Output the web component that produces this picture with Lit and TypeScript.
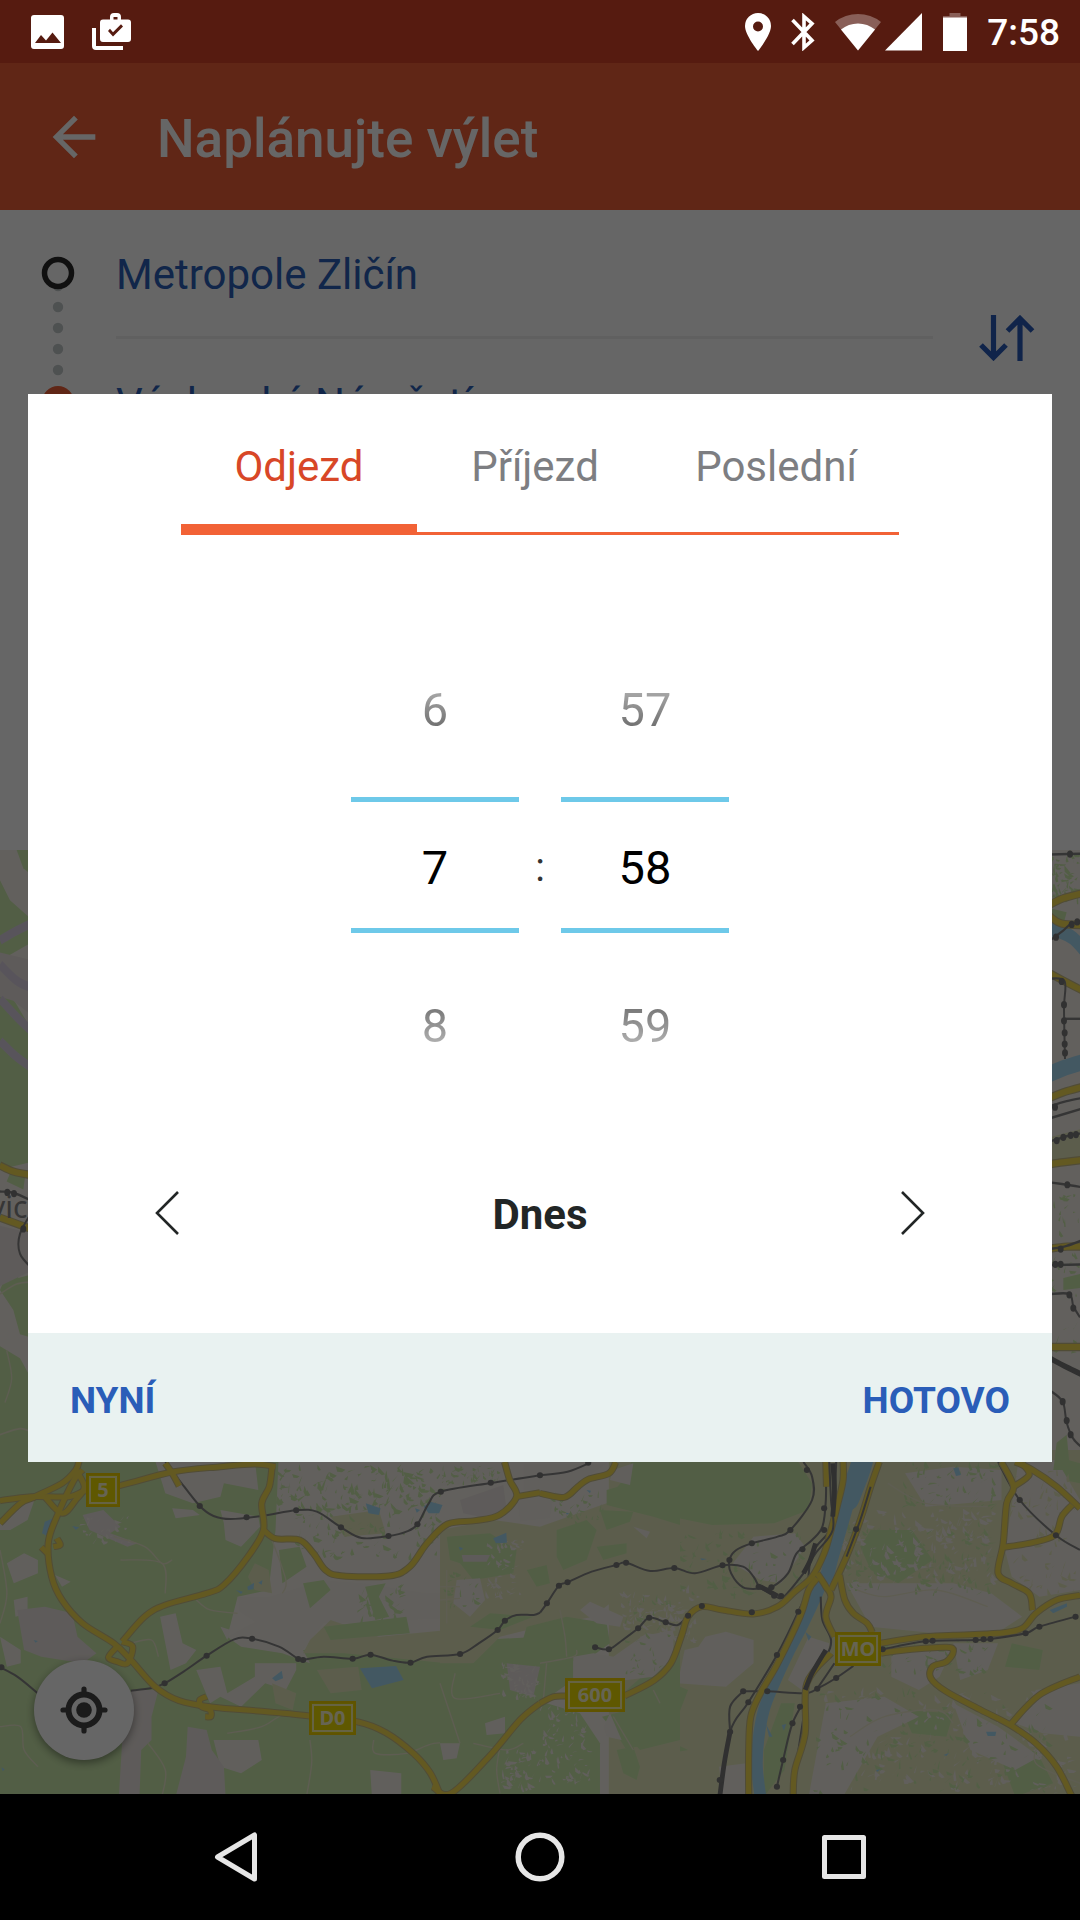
import { LitElement, html, svg, css } from "lit";
import { customElement, state } from "lit/decorators.js";
import { classMap } from "lit/directives/class-map.js";

type Pt = [number, number];

/* Turns "x,y x,y ..." into points. */
const pts = (s: string): Pt[] =>
  s.trim().split(/\s+/).map((p) => p.split(",").map(Number) as Pt);

/* Smooth path through the given points. */
const curve = (s: string): string => {
  const p = pts(s);
  let d = `M${p[0][0]} ${p[0][1]}`;
  for (let i = 0; i < p.length - 1; i++) {
    const a = p[i - 1] ?? p[i];
    const b = p[i];
    const c = p[i + 1];
    const e = p[i + 2] ?? c;
    d += `C${b[0] + (c[0] - a[0]) / 6} ${b[1] + (c[1] - a[1]) / 6} ${c[0] - (e[0] - b[0]) / 6} ${c[1] - (e[1] - b[1]) / 6} ${c[0]} ${c[1]}`;
  }
  return d;
};

const area = (cls: string, list: string[]) =>
  list.map((s) => svg`<polygon class=${cls} points=${s}></polygon>`);
const roads = (list: string[]) => [
  ...list.map((s) => svg`<path class="casing" d=${curve(s)}></path>`),
  ...list.map((s) => svg`<path class="road" d=${curve(s)}></path>`),
];
const rails = (list: string[]) =>
  list.map((s) => svg`<path class="track" d=${curve(s)}></path>`);
const lanes = (list: string[]) =>
  list.map((s) => svg`<path class="lane" d=${curve(s)}></path>`);
const stops = (s: string) =>
  pts(s).map(([x, y]) => svg`<circle class="stop" cx=${x} cy=${y} r="9"></circle>`);

/* Small scattered parcels that give built-up zones their texture. */
const parcels = (cls: string, seed: number, n: number, x: number, y: number, w: number, h: number, size: number) => {
  let s = seed;
  const rnd = () => (s = (s * 16807) % 2147483647) / 2147483647;
  let d = "";
  for (let i = 0; i < n; i++) {
    const cx = x + rnd() * w;
    const cy = y + rnd() * h;
    const a = rnd() * 3;
    const l = size * (0.4 + rnd());
    const t = size * (0.2 + rnd() * 0.5);
    const ux = Math.cos(a), uy = Math.sin(a);
    d += `M${(cx - ux * l).toFixed(0)} ${(cy - uy * l).toFixed(0)}l${(ux * l * 2).toFixed(0)} ${(uy * l * 2).toFixed(0)}l${(-uy * t - ux * l * 0.5).toFixed(0)} ${(ux * t).toFixed(0)}l${(-ux * l).toFixed(0)} ${(-uy * l + t * 0.4).toFixed(0)}z`;
  }
  return svg`<path class=${cls} d=${d}></path>`;
};

const WEST = "translate(0 600) scale(.3444 .3333)";
const EAST = "translate(540 600) scale(.3444 .3333)";
const MIDDLE = "translate(440 600) scale(.3333)";
const LEFT_EDGE = "translate(0 -10) scale(.3333 .4018)";
const RIGHT_EDGE = "translate(1030 -10) scale(.3333 .4018)";

@customElement("city-map")
class CityMap extends LitElement {
  static styles = css`
    :host { display: block; overflow: hidden; background: #f5f0e8; }
    .canvas { display: block; width: 100%; height: 100%; }
    .land { fill: #f3eee7; }
    .green { fill: #cdebad; }
    .olive { fill: #e6e9bf; }
    .town { fill: #ebe4e0; }
    .lake { fill: #a8dcf5; }
    .river { fill: none; stroke: #a8dcf5; stroke-linecap: round; stroke-linejoin: round; }
    .lane { fill: none; stroke: #ebe8cc; stroke-width: 4; }
    .violet { fill: none; stroke: #dcd3e4; stroke-width: 22; }
    .casing { fill: none; stroke: #c9be88; stroke-width: 21; stroke-linejoin: round; }
    .road { fill: none; stroke: #f8de54; stroke-width: 15; stroke-linejoin: round; }
    .track { fill: none; stroke: #868686; stroke-width: 6; }
    .heavy { fill: none; stroke: #787878; stroke-width: 14; }
    .stop { fill: #7c7c7c; }
    .plate { fill: #eedb00; stroke: #f0d000; stroke-width: 2; }
    .inset { fill: none; stroke: #fff8a8; stroke-width: 2; }
    .ref { fill: #fffbd0; font: 700 20px "Noto Sans", sans-serif; text-anchor: middle; }
    .place { fill: #888; font: 400 30px "Noto Sans", sans-serif; }
  `;

  private plate(x: number, y: number, w: number, label: string) {
    return svg`<rect class="plate" x=${x} y=${y} width=${w} height="32"></rect>
      <rect class="inset" x=${x + 3} y=${y + 3} width=${w - 6} height="26"></rect>
      <text class="ref" x=${x + w / 2} y=${y + 23}>${label}</text>`;
  }

  private westLand() {
    return svg`<g transform=${WEST}>
      ${area("green", ["0,0 810,0 800,240 780,420 690,440 660,560 880,600 1568,560 1568,1040 0,1040"])}
      ${area("land", [
        "450,30 740,30 750,120 650,100 640,140 560,160 480,130",
        "640,180 750,200 755,230 700,290 655,270 650,220", "0,210 40,170 100,150 80,210 30,240 0,240",
        "20,340 70,310 110,330 110,370 40,400", "40,450 80,440 80,490 45,500", "0,560 60,600 60,640 20,650",
        "465,500 510,490 530,580 570,600 540,640 495,660",
        "690,440 780,440 940,390 1060,400 1240,430 1390,420 1400,500 1200,510 1100,520 940,520 880,600 900,640 820,610 700,590 660,560 740,515 695,485",
        "570,660 640,650 660,730 740,680 740,640 860,640 860,660 830,720 770,700 700,770 640,740 610,760",
        "620,870 750,870 760,930 700,970 640,950", "1075,960 1165,970 1165,1040 1080,1040",
        "500,175 560,180 580,195 510,205", "160,375 205,395 180,410", "640,530 670,540 660,570",
      ])}
      ${area("town", [
        "50,480 130,470 210,490 225,560 280,610 240,640 120,620 70,600", "380,720 460,720 440,800 440,870 410,900 405,1040 345,1040 355,870 385,800",
        "545,830 600,840 615,900 650,950 655,1040 510,1040 540,920",
        "240,195 300,180 350,230 320,250 400,280 370,290 260,240",
      ])}
      ${area("olive", [
        "960,200 1100,180 1120,250 1000,260", "900,570 960,510 1100,560 1300,540 1300,640 1000,610 880,610",
        "740,340 780,360 790,430 740,420 720,380", "790,700 860,730 850,780 800,760", "920,660 1040,650 1050,720 960,730",
      ])}
      ${area("green", [
        "810,300 870,290 890,350 820,400", "880,400 940,390 960,420 900,475", "940,530 1180,500 1190,550 960,570",
        "1060,410 1120,400 1100,440 1130,500 1090,510",
      ])}
      ${parcels("green", 77, 150, 810, 50, 480, 130, 13)}
      ${parcels("green", 91, 90, 860, 190, 420, 130, 11)}
      ${parcels("green", 13, 40, 1050, 400, 120, 110, 12)}
      ${parcels("land", 41, 30, 240, 190, 140, 90, 9)}
      ${lanes([
        "350,330 470,340 480,430", "790,270 830,390 820,430", "430,880 480,960 470,1040", "660,850 760,830 830,790 900,800",
        "900,870 905,940 890,1040", "1085,870 1090,910 1180,910 1260,880 1350,880", "0,300 20,430 0,520", "330,260 420,290 470,340 500,330",
        "570,450 610,480 690,490", "380,580 440,570 460,620", "0,830 60,830 70,900 110,950",
      ])}
    </g>`;
  }

  private eastLand() {
    return svg`<g transform=${EAST}>
      ${area("olive", ["200,0 1568,0 1568,1040 200,1040"])}
      ${area("green", [
        "270,20 740,20 790,100 780,180 680,220 500,225 330,190 200,140 250,80",
        "360,690 430,720 400,800 290,830 430,900 270,930 220,850 180,800 330,760", "700,760 740,760 710,960 650,1040 650,900",
        "1370,580 1460,600 1450,660 1350,650", "960,240 1080,240 1140,330 1040,400 960,360 930,290",
        "1500,20 1568,40 1568,100 1520,90", "1050,780 1200,790 1180,860 1080,850", "1340,930 1440,900 1490,1000 1380,1040",
      ])}
      ${area("land", [
        "480,560 540,545 620,570 620,640 540,710 400,700 420,600 460,590",
        "1060,70 1200,50 1340,60 1340,150 1120,170", "890,400 1000,400 1200,400 1310,430 1400,500 1340,540 1150,550 960,530",
        "1390,30 1500,30 1568,150 1568,420 1450,440 1370,380 1350,300", "1020,600 1200,590 1160,680 1100,720 1020,680",
        "1200,580 1330,580 1300,660 1220,690", "780,560 840,580 830,640 760,720 720,690", "620,260 740,250 770,290 700,400 640,390 560,340",
        "830,760 1000,740 1100,800 980,860 880,1040 780,1040",
        "1200,760 1330,830 1450,920 1380,960 1250,900", "1440,720 1568,700 1568,860 1460,850 1380,820", "520,950 600,940 600,1040 530,1040",
      ])}
      ${parcels("land", 11, 170, 880, 180, 450, 220, 12)}
      ${parcels("green", 17, 150, 890, 220, 430, 210, 10)}
      ${parcels("green", 19, 70, 1060, 40, 270, 130, 11)}
      ${parcels("land", 31, 200, 830, 720, 730, 310, 12)}
      ${parcels("green", 53, 160, 800, 720, 700, 310, 11)}
      ${parcels("land", 61, 60, 350, 390, 110, 190, 11)}
      ${parcels("green", 67, 90, 380, 250, 380, 190, 11)}
      ${parcels("olive", 71, 80, 1370, 60, 190, 380, 12)}
      ${parcels("green", 97, 60, 1000, 560, 300, 110, 10)}
      ${lanes(["920,420 1000,440 1150,420 1300,470", "1010,100 1120,160 1300,170", "900,860 1000,800 1150,780 1200,820", "1460,860 1440,940 1568,1000"])}
    </g>`;
  }

  private middleLand() {
    return svg`<g transform=${MIDDLE}>
      ${area("olive", ["0,240 160,210 300,230 500,160 600,190 720,230 720,460 560,420 460,500 300,530 180,560 100,640 0,660", "530,900 720,870 720,1040 560,1040"])}
      ${area("green", [
        "590,30 720,30 720,225 640,200 500,165 500,120 570,100", "20,260 150,250 230,300 220,370 100,390 60,340 30,330",
        "350,240 440,210 470,240 440,330 370,360 350,320", "260,360 320,345 330,400 290,410", "480,180 580,185 570,215 500,240", "470,290 560,280 560,310 490,330",
        "260,530 380,500 500,520 510,580 440,630 300,640 240,600", "90,530 150,490 280,500 180,540", "0,640 100,640 200,600 300,640 400,620 400,690 300,760 200,830 200,900 0,900",
        "0,890 200,860 220,1040 0,1040", "560,720 720,580 720,870 600,900 530,820", "200,820 320,760 420,790 480,880 480,1040 200,1040",
        "530,900 580,890 600,950 590,990 550,970",
      ])}
      ${area("land", [
        "0,40 190,40 190,90 0,110", "230,150 340,150 330,205 240,215", "250,40 500,40 430,90 390,135 250,120", "520,60 580,40 570,105 510,90",
        "50,390 120,385 135,450 90,500 40,460", "420,480 450,455 550,500 540,530 470,520", "520,620 620,550 700,560 700,620 640,680 560,690 400,690 400,620 460,610",
        "135,820 195,800 195,850 140,855", "0,880 60,880 50,925 10,930", "490,830 510,790 545,870 500,860", "580,230 630,245 620,265", "600,560 700,540 690,640 640,660",
      ])}
      ${area("town", ["60,150 190,105 200,180 140,205 70,190", "65,315 150,315 140,335 70,335", "200,640 300,650 280,740 210,720"])}
      ${parcels("green", 83, 50, 10, 50, 170, 50, 9)}
      ${parcels("green", 85, 40, 340, 130, 150, 90, 9)}
      ${parcels("land", 87, 60, 140, 270, 110, 180, 9)}
      ${parcels("land", 59, 90, 300, 760, 150, 240, 9)}
      ${parcels("land", 23, 50, 190, 640, 110, 100, 9)}
      ${parcels("land", 29, 45, 190, 890, 110, 130, 11)}
      ${parcels("land", 61, 60, 550, 430, 170, 110, 9)}
      ${parcels("green", 63, 50, 560, 440, 150, 240, 9)}
      ${parcels("green", 65, 30, 20, 360, 100, 110, 9)}
      ${lanes(["20,360 20,520", "0,410 60,410", "0,450 60,445", "360,480 375,560 380,620", "300,640 400,620 410,600", "45,670 45,745 180,730", "320,640 310,750", "0,700 50,850 60,880", "100,880 200,900 250,880", "180,890 170,960 180,1030", "520,800 580,900", "640,720 660,760"])}
    </g>`;
  }

  private westLines() {
    return svg`<g transform=${WEST}>
      ${area("lake", [
        "1045,655 1150,648 1172,690 1080,715", "1062,160 1105,175 1100,195 1070,190", "1230,170 1250,155 1285,165 1275,190 1245,190",
        "1432,265 1470,248 1472,278 1440,280", "790,685 818,662 822,685 800,694", "130,215 155,205 140,260 122,250",
        "718,410 738,398 736,418 720,420", "750,398 762,390 760,404", "210,228 230,232 220,240", "685,420 705,425 700,432",
        "1205,175 1220,180 1210,188", "1332,290 1345,295 1336,302", "4,952 14,958 8,964", "98,570 110,573 103,578",
      ])}
      ${rails([
        "480,36 520,90 580,168 620,198 670,207 760,198 860,181 920,185 990,232 1050,264 1130,258 1180,245 1212,223 1245,160 1280,125 1430,98 1568,76",
        "0,652 50,680 110,730", "380,722 440,714 478,700 540,660 600,617 680,568 732,566 810,590 866,627 880,630 940,620 1026,626 1076,614 1140,632 1192,638 1240,620 1336,612 1390,580 1445,540 1466,512 1500,495 1550,495 1568,488",
      ])}
      ${roads([
        "0,152 90,140 200,140 250,122 350,106 500,66 640,50 740,42 800,50", "100,140 180,100 220,60 230,30", "0,220 60,160 100,142",
        "130,140 180,190 220,150 245,110 220,60", "480,40 500,70 520,108", "240,60 215,90 165,200 140,280 150,380 180,450 240,520 330,580 380,630 450,710 520,752 620,772 760,784 900,798 1040,816 1120,848 1200,910 1250,970 1280,1040",
        "120,292 138,310", "165,265 175,285 155,290", "790,50 782,110 760,160 765,240 720,320 650,405 600,430 480,465 420,500 355,575", "765,240 800,266 870,270 910,310 945,360 990,377 1130,378 1190,350 1240,280 1300,222 1380,212 1450,195 1500,140 1480,90 1465,36",
        "1500,140 1568,128", "355,575 385,590 370,640 340,635 315,622 340,590", "600,740 580,750 585,770 610,780 612,800 596,800", "1255,1010 1310,1030 1420,920 1510,810 1568,760",
      ])}
      ${stops("580,168 716,202 860,181 990,232 1128,258 1212,223 1280,125 1425,98 478,700 600,617 732,566 866,627 880,630 1024,626 1076,614 1192,638 1336,612 1445,540 1466,512 4,652")}
    </g>`;
  }

  private eastLines() {
    return svg`<g transform=${EAST}>
      <path class="river" stroke-width="62" d=${curve("945,0 925,70 895,150")}></path>
      <path class="river" stroke-width="40" d=${curve("895,150 870,240 845,330 832,385")}></path>
      <path class="river" stroke-width="34" d=${curve("815,400 805,430 760,530 720,610 680,700 650,780 634,870 630,950 640,1040")}></path>
      ${area("lake", [
        "1200,55 1215,52 1222,75 1208,78", "1480,480 1530,460 1530,470 1490,490", "1295,845 1325,845 1322,858 1300,858", "1172,915 1188,908 1180,918",
        "975,960 988,958 980,966", "770,545 788,560 780,572", "655,820 675,860 665,860", "465,325 485,327 470,331", "702,825 715,822 708,842", "135,120 148,122 145,130", "75,188 85,190 78,194",
      ])}
      ${rails([
        "0,76 80,65 145,38", "0,488 20,460 55,407 80,397 150,365 222,345 250,338 320,363 390,354 450,370 530,346 590,350 620,380 635,410",
        "765,36 790,80 790,150 727,240 690,260 615,280 570,300 550,330 555,370 590,412 640,416 672,412 720,370 745,310 790,270 820,230 830,150 830,36",
        "635,410 680,437 710,438 780,350", "860,36 855,150 845,235 790,310 775,420 750,485 688,615 605,757 552,845 520,1040",
        "430,497 400,525 365,517 317,503 285,535 240,570 200,598 160,592", "590,724 660,724 770,730 805,716 860,684 910,648", "805,716 855,640",
        "775,740 733,820 706,930 688,1010", "552,845 552,770 590,724", "1330,36 1393,150 1498,256 1568,300",
        "815,440 820,510 845,570 830,620 780,690 770,770 735,1000",
      ])}
      ${roads([
        "0,130 70,142 110,110 140,88 200,70 220,36", "0,760 40,740 75,738", "245,738 330,692 380,640 410,560 430,500 470,470 530,480 620,492 690,470 740,425 790,380 825,310 845,240 865,160 880,90 880,30",
        "830,36 832,110", "985,36 960,110 930,210 890,320 845,420", "805,385 780,420 755,500 690,640 640,730 612,800 606,900 606,1040", "805,370 830,410 845,440 830,500 855,560",
        "870,375 885,450 910,490 950,520 965,548", "990,580 1100,562 1200,556 1330,550 1400,535 1440,490 1500,450 1568,436", "990,610 1060,600 1180,592 1200,605 1180,635 1140,650 1135,685 1180,725 1280,780 1365,825 1440,880 1500,950 1545,1040",
        "1365,825 1450,735 1568,680", "1380,36 1430,60 1500,110 1568,175", "1340,36 1375,110 1355,160 1345,280 1330,370 1370,400 1420,430 1430,480", "1375,110 1420,75 1400,40",
        "1345,292 1430,278 1495,255 1515,200 1545,165", "845,610 775,700 770,850 740,960 735,1040",
      ])}
      ${rails(["840,36 845,150 850,240 800,310 775,350", "995,598 1120,574 1270,570 1310,567 1410,550 1450,530 1555,500", "960,110 930,210 890,320"])}
      <path class="heavy" d=${curve("850,40 855,120 850,200")}></path>
      <path class="heavy" d=${curve("800,280 785,330 765,370")}></path>
      <path class="heavy" d=${curve("552,845 535,940 522,1040")}></path>
      <path class="heavy" d=${curve("830,600 790,670 770,720")}></path>
      <path class="heavy" d=${curve("640,410 690,438")}></path>
      ${stops("222,345 250,338 390,354 530,346 55,407 80,397 20,460 550,330 615,280 727,240 775,60 762,298 635,410 672,412 680,437 700,438 750,485 688,615 605,757 552,845 522,990 285,535 317,503 365,517 430,497 160,592 200,598 590,724 660,724 805,716 860,684 733,820 755,770 706,930 688,1010 1120,574 1140,572 1265,570 1288,568 1308,567 1410,550 1450,530 1555,500 1393,150 1498,256 995,598 0,76 140,38 825,175 825,240 918,238 470,468 615,487")}
    </g>`;
  }

  private leftEdge() {
    return svg`<g transform=${LEFT_EDGE}>
      ${area("green", [
        "0,100 30,150 84,190 84,260 0,300", "50,25 100,25 100,90 70,70", "0,340 100,480 100,560 100,800 0,820", "30,830 75,840 70,870 20,850",
        "40,1040 55,1090 100,1080 100,1240 60,1230 40,1170 0,1120", "0,1260 60,1290 100,1350 100,1568 0,1568", "10,980 30,970 20,1010",
      ])}
      ${area("town", ["0,280 100,300 100,440 40,400 0,390", "0,960 100,980 100,1070 0,1110"])}
      ${["0,250 40,230 100,205", "0,310 50,350 100,370", "0,395 50,440 100,480", "0,500 50,540 100,570"].map((s) => svg`<path class="violet" d=${curve(s)}></path>`)}
      ${roads(["0,810 40,825 100,835", "0,940 50,955 100,970"])}
      ${rails(["0,875 40,878 100,900", "100,920 60,980 60,1030 100,1070"])}
      ${stops("22,877 42,880 70,968")}
      ${lanes(["0,1480 60,1465 100,1475", "20,1270 35,1340 15,1400", "0,1130 50,1105 100,1100"])}
    </g>`;
  }

  private rightEdge() {
    return svg`<g transform=${RIGHT_EDGE}>
      ${parcels("green", 101, 60, 60, 30, 90, 120, 10)}
      ${parcels("green", 103, 36, 60, 860, 90, 420, 9)}
      ${area("olive", ["60,740 150,720 150,800 60,800"])}
      ${area("green", ["60,170 110,180 100,210 60,200", "80,1500 110,1480 120,1568 70,1568", "100,1090 150,1080 150,1115 100,1120"])}
      <path class="river" stroke-width="34" d=${curve("40,220 90,228 130,245 180,290")}></path>
      <path class="river" stroke-width="40" d=${curve("40,590 100,568 170,550")}></path>
      ${roads(["50,165 100,145 170,130", "60,190 95,208 170,212", "60,332 100,350 170,380", "50,645 100,628 170,612", "50,808 100,802 170,795", "50,1018 110,1012 170,1012", "50,1262 170,1262"])}
      ${rails([
        "60,36 170,34", "60,250 100,225 125,208 170,203", "60,345 104,352 102,420 105,545", "105,445 170,445", "50,665 110,650 170,640", "50,695 170,665",
        "60,750 130,733 170,730", "60,852 110,858 170,866", "60,1018 110,1010 170,992", "60,1058 170,1056", "60,1130 118,1130 130,1160 150,1188", "60,1370 98,1398 110,1450 130,1490 160,1515",
      ])}
      <path class="heavy" d=${curve("60,1290 110,1312 170,1336")}></path>
      ${stops("120,35 78,242 125,210 142,204 95,352 102,410 102,450 104,480 104,508 105,530 75,665 80,748 100,740 122,735 138,733 112,858 92,1056 76,1056 118,1132 130,1165 98,1398 110,1445 122,1480 92,1018")}
    </g>`;
  }

  render() {
    return html`<svg class="canvas" viewBox="0 0 1080 944" preserveAspectRatio="xMidYMid slice" role="img" aria-label="Mapa">
      ${this.westLand()} ${this.eastLand()} ${this.middleLand()}
      ${this.leftEdge()} ${this.rightEdge()}
      ${this.westLines()} ${this.eastLines()}
      <text class="place" x="-10" y="368">vice</text>
      ${this.plate(87, 624, 32, "5")} ${this.plate(310, 852, 45, "D0")}
      ${this.plate(566, 829, 58, "600")} ${this.plate(836, 783, 44, "MO")}
    </svg>`;
  }
}

@customElement("number-wheel")
class NumberWheel extends LitElement {
  static properties = { value: { type: Number }, max: { type: Number }, label: {} };
  declare value: number;
  declare max: number;
  declare label: string;

  static styles = css`
    :host { display: flex; flex-direction: column; width: 168px; }
    .step, .value {
      box-sizing: border-box; width: 100%; margin: 0; border: 0; padding: 6px 0 0; background: none;
      font: 400 47px/56px Roboto, sans-serif; color: #000; text-align: center; border-radius: 0; outline: 0;
    }
    .step { height: 180px; cursor: pointer; }
    .before { mask-image: linear-gradient(to bottom, transparent 20px, #000 100%); }
    .after { mask-image: linear-gradient(to top, transparent 20px, #000 100%); }
    .value { height: 136px; border-top: 5px solid #6ec9e9; border-bottom: 5px solid #6ec9e9; }
  `;

  private wrap(n: number) {
    return (n + this.max + 1) % (this.max + 1);
  }

  render() {
    return html`
      <button class="step before" @click=${() => (this.value = this.wrap(this.value - 1))}>${this.wrap(this.value - 1)}</button>
      <input class="value" inputmode="numeric" aria-label=${this.label} .value=${String(this.value)} />
      <button class="step after" @click=${() => (this.value = this.wrap(this.value + 1))}>${this.wrap(this.value + 1)}</button>
    `;
  }
}

@customElement("app-root")
class AppRoot extends LitElement {
  @state() private tab = "Odjezd";

  static styles = css`
    :host { display: flex; flex-direction: column; min-height: 100vh; font-family: Roboto, sans-serif; background: #000; }
    button { border: 0; margin: 0; padding: 0; background: none; color: inherit; font-family: inherit; cursor: pointer; }
    svg { display: block; }

    .status { display: flex; justify-content: space-between; align-items: center; height: 63px; padding: 0 20px 0 30px; background: #561b10; color: #fff; }
    .notices, .signals { display: flex; align-items: center; }
    .notices { gap: 26px; }
    .signals { gap: 20px; }
    .network { display: flex; gap: 4px; }
    .clock { padding-top: 2px; font-size: 37px; font-weight: 500; line-height: 44px; }

    .screen { position: relative; flex: 1; display: flex; flex-direction: column; }
    .page { flex: 1; display: flex; flex-direction: column; }
    .bar { display: flex; align-items: center; gap: 51px; height: 147px; padding: 0 42px; background: #f05f37; color: #fff; }
    .title { margin: 0; padding-top: 4px; font-size: 53px; font-weight: 500; line-height: 64px; }

    .route { display: grid; grid-template-columns: 116px 1fr 147px; height: 640px; box-sizing: border-box; background: #fff; align-items: start; }
    .trail { justify-self: center; padding-top: 45px; }
    .place { display: block; width: 100%; height: 126px; padding-top: 4px; font-size: 42px; line-height: 50px; color: #2b5fb8; text-align: left; }
    .origin { height: 129px; border-bottom: 3px solid #f0f0f0; }
    .swap { display: grid; place-items: center; height: 255px; color: #2a5bb8; }

    .mapbox { position: relative; flex: 1; display: flex; }
    .map { flex: 1; height: 944px; }
    .locate { position: absolute; left: 34px; bottom: 34px; display: grid; place-items: center; width: 100px; height: 100px; border-radius: 50%; background: #fff; box-shadow: 0 3px 8px rgba(0, 0, 0, 0.4); color: #444; }

    .scrim { position: absolute; inset: 0; display: grid; align-items: center; padding: 0 28px 2px; background: rgba(0, 0, 0, 0.6); }
    .dialog { background: #fff; }
    .tabs { display: grid; grid-template-columns: 236fr 236fr 246fr; margin: 0 153px; }
    .tab { box-sizing: border-box; height: 141px; padding: 16px 0 8px; border-bottom: 3px solid #f26236; font-size: 42px; line-height: 50px; color: #7d7e82; }
    .current { padding-bottom: 0; border-bottom-width: 11px; color: #d84727; }
    .time { display: flex; justify-content: center; align-items: center; padding-top: 82px; }
    .colon { width: 42px; padding-top: 6px; font-size: 40px; line-height: 48px; text-align: center; color: #333; }
    .day { display: flex; justify-content: space-between; align-items: center; height: 220px; box-sizing: border-box; padding: 0 95px 20px; color: #222626; }
    .turn { display: grid; place-items: center; width: 88px; height: 88px; }
    .date { padding-top: 4px; font-size: 42px; font-weight: 700; line-height: 50px; }
    .actions { display: flex; justify-content: space-between; align-items: center; height: 129px; box-sizing: border-box; padding: 8px 42px 0; background: #e9f2f1; }
    .action { font-size: 37px; font-weight: 700; line-height: 44px; color: #2a5db8; }

    .nav { display: flex; justify-content: center; height: 126px; background: #000; }
    .key { display: grid; place-items: center; width: 304px; color: #e6e6e6; }
  `;

  private statusBar() {
    return html`<header class="status">
      <div class="notices">
        <svg width="36" height="36" viewBox="0 0 36 36"><path fill="#fff" fill-rule="evenodd" d="M4 1h27a3 3 0 0 1 3 3v28a3 3 0 0 1-3 3H4a3 3 0 0 1-3-3V4a3 3 0 0 1 3-3zM5 29h26L22.500 18.500 16 26.500l-5-5.500z"/></svg>
        <svg width="40" height="38" viewBox="0 0 40 38"><path fill="#fff" fill-rule="evenodd" d="M11 6.500h7V4a4 4 0 0 1 4-4h3a4 4 0 0 1 4 4v2.500h7a3 3 0 0 1 3 3V26a3 3 0 0 1-3 3H11a3 3 0 0 1-3-3V9.500a3 3 0 0 1 3-3zm10.500 0h4V4h-4zM16 18l5 5.500 10-10-2-2.200-8 8-3-3.500z"/><path fill="#fff" d="M0 15h4v18h27v4H4a4 4 0 0 1-4-4z"/></svg>
      </div>
      <div class="signals">
        <svg width="26" height="38" viewBox="0 0 26 38"><path fill="#fff" fill-rule="evenodd" d="M13 0a13 13 0 0 1 13 13c0 9-13 25-13 25S0 22 0 13A13 13 0 0 1 13 0zm0 8.500a5 5 0 1 0 0 10 5 5 0 0 0 0-10z"/></svg>
        <svg width="24" height="38" viewBox="0 0 24 38"><path fill="none" stroke="#fff" stroke-width="3.600" d="M1.500 7 21 27.500 13 34.500V3.500L21 10.500 1.500 31"/></svg>
        <div class="network">
          <svg width="46" height="38" viewBox="0 0 46 38"><path fill="#fff" fill-opacity=".3" d="M0 9a37 37 0 0 1 46 0L23 37.500z"/><path fill="#fff" d="M6 16.500a27 27 0 0 1 34 0L23 37.500z"/></svg>
          <svg width="38" height="38" viewBox="0 0 38 38"><path fill="#fff" d="M37 0v37.500H0z"/></svg>
        </div>
        <svg width="24" height="38" viewBox="0 0 24 38"><path fill="#fff" fill-opacity=".3" d="M6.500 0h11v3H24v2H0V3h6.500z"/><path fill="#fff" d="M0 4.500h24V38H0z"/></svg>
        <time class="clock">7:58</time>
      </div>
    </header>`;
  }

  render() {
    return html`
      ${this.statusBar()}
      <div class="screen">
        <main class="page">
          <div class="bar">
            <button aria-label="Zpět"><svg width="64" height="64" viewBox="0 0 24 24" fill="currentColor"><path d="M20 11H7.830l5.590-5.590L12 4l-8 8 8 8 1.410-1.410L7.830 13H20v-2z"/></svg></button>
            <h1 class="title">Naplánujte výlet</h1>
          </div>
          <section class="route">
            <svg class="trail" width="36" height="168" viewBox="0 0 36 168">
              ${[31, 52, 73, 94, 115].map((y) => svg`<circle cx="18" cy=${y} r="5.200" fill="#c4cacb"></circle>`)}
              <circle cx="18" cy="18" r="13.500" fill="#fff" stroke="#282828" stroke-width="5.500"></circle>
              <circle cx="18" cy="147" r="16" fill="#f05f37"></circle>
            </svg>
            <div>
              <button class="place origin">Metropole Zličín</button>
              <button class="place">Václavské Náměstí</button>
            </div>
            <button class="swap" aria-label="Prohodit">
              <svg width="56" height="46" viewBox="0 0 56 46" fill="none" stroke="currentColor" stroke-width="5.200"><path d="M14.500 0v42M2 30l12.500 12.500L27 30M41 46V4M28.500 16 41 3.500 53.500 16"/></svg>
            </button>
          </section>
          <div class="mapbox">
            <city-map class="map"></city-map>
            <button class="locate" aria-label="Moje poloha">
              <svg width="48" height="48" viewBox="0 0 48 48" fill="none" stroke="currentColor" stroke-linecap="round"><circle cx="24" cy="24" r="15.500" stroke-width="6"/><circle cx="24" cy="24" r="7.800" fill="currentColor" stroke="none"/><path stroke-width="5.200" d="M24 3v5M24 40v5M3 24h5M40 24h5"/></svg>
            </button>
          </div>
        </main>
        <div class="scrim">
          <section class="dialog" role="dialog" aria-label="Čas cesty">
            <div class="tabs" role="tablist">
              ${["Odjezd", "Příjezd", "Poslední"].map((t) => html`<button role="tab" aria-selected=${t === this.tab} class=${classMap({ tab: true, current: t === this.tab })} @click=${() => (this.tab = t)}>${t}</button>`)}
            </div>
            <div class="time">
              <number-wheel label="Hodiny" .value=${7} .max=${23}></number-wheel>
              <span class="colon">:</span>
              <number-wheel label="Minuty" .value=${58} .max=${59}></number-wheel>
            </div>
            <div class="day">
              <button class="turn" aria-label="Předchozí den"><svg width="24" height="44" viewBox="0 0 24 44" fill="none" stroke="currentColor" stroke-width="2.600"><path d="M23 1 2 22l21 21"/></svg></button>
              <span class="date">Dnes</span>
              <button class="turn" aria-label="Další den"><svg width="24" height="44" viewBox="0 0 24 44" fill="none" stroke="currentColor" stroke-width="2.600"><path d="m1 1 21 21L1 43"/></svg></button>
            </div>
            <div class="actions">
              <button class="action">NYNÍ</button>
              <button class="action">HOTOVO</button>
            </div>
          </section>
        </div>
      </div>
      <nav class="nav">
        <button class="key" aria-label="Zpět"><svg width="44" height="50" viewBox="0 0 44 50" fill="none" stroke="currentColor" stroke-width="5" stroke-linejoin="round"><path d="M40.500 3v44L3.500 25z"/></svg></button>
        <button class="key" aria-label="Domů"><svg width="50" height="50" viewBox="0 0 50 50" fill="none" stroke="currentColor" stroke-width="5.500"><circle cx="25" cy="25" r="21.800"/></svg></button>
        <button class="key" aria-label="Přehled"><svg width="44" height="44" viewBox="0 0 44 44" fill="none" stroke="currentColor" stroke-width="5" stroke-linejoin="round"><path d="M2.500 2.500h39v39h-39z"/></svg></button>
      </nav>
    `;
  }
}
